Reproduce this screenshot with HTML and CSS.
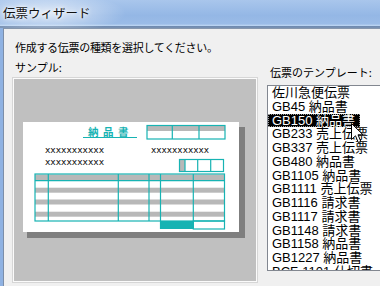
FILE: index.html
```html
<!DOCTYPE html>
<html lang="ja">
<head>
  <meta charset="UTF-8">
  <title>伝票ウィザード</title>
  <link rel="stylesheet" href="styles.css">
</head>
<body>
<div class="window">
  <div class="titlebar"><span class="title">伝票ウィザード</span></div>
  <div class="frame">
    <div class="client">
      <p class="lead">作成する伝票の種類を選択してください。</p>
      <div class="columns">
        <div class="sample-col">
          <div class="label">サンプル:</div>
          <div class="sample">
            <!-- 納品書のプレビュー -->
            <svg width="242" height="202" viewBox="0 0 242 202">
              <rect x="13" y="48" width="218" height="111" fill="#7f7f7f"/>
              <rect x="9" y="43" width="216" height="110" fill="#ffffff"/>

              <text x="74" y="57" class="form-title">納品書</text>
              <line x1="69" y1="58.5" x2="123" y2="58.5" class="teal" stroke-width="1.3"/>

              <rect x="133" y="46.5" width="78" height="5.5" fill="#b8b8b8"/>
              <rect x="133" y="46.5" width="78" height="13.5" class="teal-box"/>
              <line x1="158.3" y1="46.5" x2="158.3" y2="60" class="teal"/>
              <line x1="185" y1="46.5" x2="185" y2="60" class="teal"/>

              <text x="31" y="74" class="xx" textLength="59" lengthAdjust="spacingAndGlyphs">xxxxxxxxxxx</text>
              <text x="31" y="86" class="xx" textLength="59" lengthAdjust="spacingAndGlyphs">xxxxxxxxxxx</text>
              <text x="137" y="73.5" class="xx" textLength="58" lengthAdjust="spacingAndGlyphs">xxxxxxxxxxx</text>

              <rect x="165.5" y="80.5" width="5.5" height="12" fill="#b8b8b8"/>
              <rect x="165.5" y="80.5" width="44" height="12" class="teal-box"/>
              <line x1="171" y1="80.5" x2="171" y2="92.5" class="teal"/>
              <line x1="183.7" y1="80.5" x2="183.7" y2="92.5" class="teal"/>
              <line x1="196.7" y1="80.5" x2="196.7" y2="92.5" class="teal"/>

              <rect x="21" y="95.5" width="189.5" height="6" fill="#b8b8b8"/>
              <rect x="21" y="108.7" width="189.5" height="5" fill="#b8b8b8"/>
              <rect x="21" y="120.5" width="189.5" height="5" fill="#b8b8b8"/>
              <rect x="21" y="132.7" width="189.5" height="5" fill="#b8b8b8"/>
              <line x1="21" y1="101.7" x2="210.5" y2="101.7" class="teal"/>
              <line x1="34.3" y1="95" x2="34.3" y2="142" class="teal"/>
              <line x1="104.3" y1="95" x2="104.3" y2="142" class="teal"/>
              <line x1="135" y1="95" x2="135" y2="142" class="teal"/>
              <line x1="146.5" y1="95" x2="146.5" y2="150" class="teal"/>
              <line x1="179.3" y1="95" x2="179.3" y2="150" class="teal"/>
              <rect x="21" y="95" width="189.5" height="47" class="teal-box" stroke-width="1.6"/>

              <rect x="146.5" y="142" width="32.8" height="8" fill="#17b3b3"/>
              <rect x="179.3" y="142" width="31.2" height="8" class="teal-box"/>
            </svg>
          </div>
        </div>
        <div class="list-col">
          <div class="label">伝票のテンプレート:</div>
          <ul class="listbox">
            <li><span>佐川急便伝票</span></li>
            <li><span>GB45 納品書</span></li>
            <li><span class="selected">GB150 納品書</span></li>
            <li><span>GB233 売上伝票</span></li>
            <li><span>GB337 売上伝票</span></li>
            <li><span>GB480 納品書</span></li>
            <li><span>GB1105 納品書</span></li>
            <li><span>GB1111 売上伝票</span></li>
            <li><span>GB1116 請求書</span></li>
            <li><span>GB1117 請求書</span></li>
            <li><span>GB1148 請求書</span></li>
            <li><span>GB1158 納品書</span></li>
            <li><span>GB1227 納品書</span></li>
            <li><span>BCF-1101 仕切書</span></li>
          </ul>
        </div>
      </div>
    </div>
  </div>

  <!-- マウスカーソル -->
  <svg class="cursor" width="13" height="21" viewBox="0 0 13 21">
    <path d="M0.5 0.5 L0.5 16.5 L4.5 12.8 L7.3 19.5 L9.8 18.4 L7 11.8 L12 11.8 Z" fill="#ffffff" stroke="#000000" stroke-width="1" stroke-linejoin="round"/>
  </svg>
</div>
</body>
</html>
```

FILE: styles.css
```css
* { box-sizing: border-box; }
body {
  margin: 0;
  width: 380px;
  height: 286px;
  overflow: hidden;
  font-family: "Noto Sans CJK JP", sans-serif;
  color: #000;
}
.window {
  position: relative;
  width: 380px;
  height: 286px;
  display: flex;
  flex-direction: column;
  overflow: hidden;
}
.titlebar {
  height: 28px;
  padding-left: 3px;
  background:
    radial-gradient(ellipse 80px 20px at 46px 13px, rgba(255,255,255,0.7), rgba(255,255,255,0) 100%),
    linear-gradient(to bottom, #a9c6ec 0%, #94b7e5 55%, #9bbce7 86%, #b9d3f1 90%, #b9d3f1 92%, #6d89b0 93%, #7b93b3 100%);
}
.title {
  display: block;
  font-size: 12.5px;
  line-height: 25px;
  color: #111;
  text-shadow: 0 0 6px #fff, 0 0 3px #fff;
}
.frame {
  flex: 1;
  display: flex;
  padding-left: 3px;
  background: #8fb2e2;
}
.client {
  flex: 1;
  background: #f0f0f0;
  border-left: 1px solid #7c8ea8;
  border-top: 1px solid #8797ad;
  padding-left: 9px;
}
.lead {
  margin: 11px 0 0;
  padding-left: 2px;
  font-size: 11px;
  line-height: 14px;
  letter-spacing: -0.3px;
}
.columns {
  display: flex;
  gap: 10px;
  margin-top: 6px;
}
.label {
  font-size: 11px;
  line-height: 14px;
  padding-left: 2px;
}
.sample {
  margin-top: 4px;
  width: 244px;
  height: 204px;
  border: 1px solid #fbfbfb;
  box-shadow: 0 0 0 1px #d6d6d6;
  background: #c0c0c0;
}
.sample svg { display: block; }
.teal { stroke: #17b3b3; stroke-width: 1.2; }
.teal-box { fill: none; stroke: #17b3b3; stroke-width: 1.2; }
.form-title {
  font-family: "Noto Sans CJK JP", sans-serif;
  font-size: 10.5px;
  font-weight: bold;
  letter-spacing: 4.5px;
  fill: #17b3b3;
}
.xx {
  font-family: "DejaVu Sans", sans-serif;
  font-size: 8.5px;
  fill: #111;
}
.list-col {
  padding-top: 5px;
}
.list-col .label {
  padding-left: 3px;
}
.listbox {
  list-style: none;
  margin: 6px 0 0;
  padding: 0;
  width: 130px;
  height: 186px;
  overflow: hidden;
  background: #fff;
  border: 1px solid #828790;
  border-right: none;
  font-family: "Liberation Sans", "Noto Sans CJK JP", sans-serif;
  font-size: 13px;
}
.listbox li {
  height: 13.75px;
  line-height: 13.75px;
  white-space: nowrap;
}
.listbox span {
  display: inline-block;
  padding: 0 5px 0 4px;
}
.listbox .selected {
  background: #000;
  color: #fff;
  outline: 1px dotted #9a9a9a;
  outline-offset: -1px;
}
.cursor {
  position: absolute;
  left: 351px;
  top: 123px;
}
```
